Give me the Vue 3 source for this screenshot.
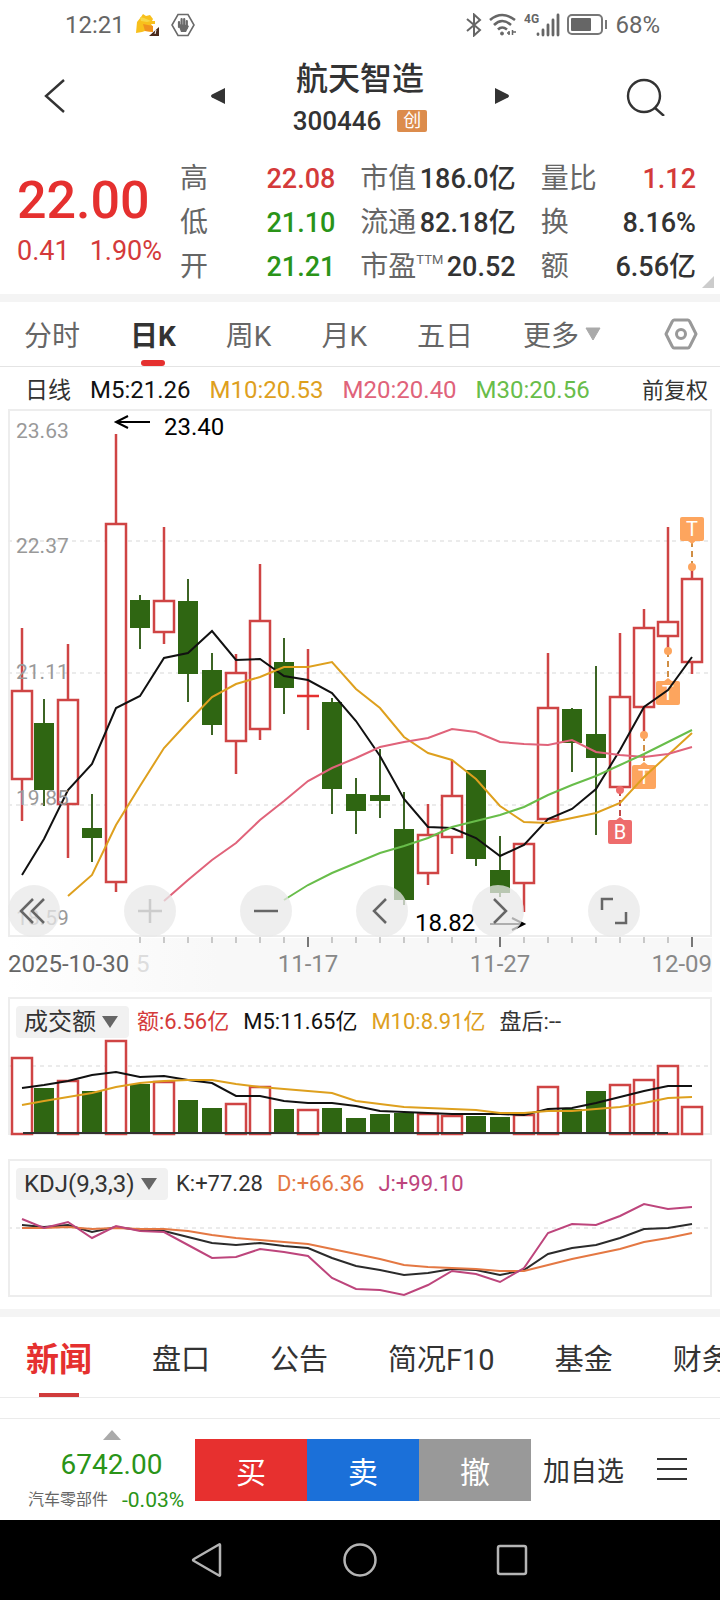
<template>
  <div class="page">
    <!-- Status bar -->
    <div class="status">
      <div class="status-left">
        <span>12:21</span>
        <svg width="26" height="24" viewBox="0 0 26 24">
          <path d="M2 9 L6 4 L8 1 L11 3 L15 2 L18 6 L17 8 L20 8 L20 11 L16 11 L18 14 L18 19 L10 18 L7 19 L1 20 Z" fill="#f8c01c" />
          <path d="M8 11 L18 13 L18 19 L10 18 Z" fill="#f0921e" />
          <path d="M5 4 L9 5 L16 8 L12 9 L6 8 Z" fill="#f6d84a" />
          <path d="M24 14 V23 H14 Z" fill="#4a2a1c" />
          <path d="M21 17 L20 21" stroke="#fff" />
        </svg>
        <svg width="24" height="24" viewBox="0 0 24 24" fill="none" stroke="#6a6a6a">
          <path d="M7 1.5 H17 L23 12 L17 22.5 H7 L1 12 Z" stroke-width="1.6" />
          <path d="M8 9 V14 M10.6 6 V14 M13.2 6 V14 M15.8 8 V15" stroke-width="2.2" stroke-linecap="round" />
          <path d="M7 11 L10 19 H15 L18 13 L16 12 Z" fill="#6a6a6a" stroke="none" />
        </svg>
      </div>
      <div class="status-right">
        <svg width="16" height="24" viewBox="0 0 16 24" fill="none" stroke="#666" stroke-width="2">
          <path d="M1 6 L14 17 L8 22.5 V1.5 L14 7 L1 18" />
        </svg>
        <svg width="28" height="24" viewBox="0 0 28 24" fill="none" stroke="#666" stroke-width="2.6">
          <path d="M1 7 Q13 -3 26 7" />
          <path d="M5 12 Q13 4 22 12" />
          <path d="M9 16.5 Q13 12.5 18 16.5" />
          <circle cx="13" cy="20.5" r="1.5" fill="#666" stroke-width="1" />
          <path d="M20 18 V22 M23.5 17 V22 M18 20 H21 M24 19 H27" stroke-width="1.5" />
        </svg>
        <svg width="36" height="24" viewBox="0 0 36 24" stroke="#666" stroke-width="2.8" stroke-linecap="round">
          <text x="0" y="10" class="network">4G</text>
          <path d="M14 21 V21.5 M19 17 V22 M24 12 V22 M29 7 V22 M34 2 V22" />
        </svg>
        <svg width="41" height="24" viewBox="0 0 41 24">
          <rect x="1" y="2" width="34" height="19" rx="4" fill="none" stroke="#777" stroke-width="2" />
          <rect x="4" y="5" width="20" height="13" rx="1" fill="#666" />
          <path d="M39 7 V16" stroke="#777" stroke-width="2" />
        </svg>
        <span>68%</span>
      </div>
    </div>

    <!-- Stock name -->
    <header class="header">
      <button class="icon-button" aria-label="返回">
        <svg width="40" height="40" viewBox="0 0 40 40" fill="none" stroke="#333" stroke-width="2.4">
          <path d="M28 4 L10 20 L28 36" />
        </svg>
      </button>
      <div class="stock">
        <button class="icon-button" aria-label="上一只">
          <svg width="16" height="18" viewBox="0 0 16 18" fill="#333"><path d="M15 1 V17 L2 10.5 Q0 9 2 7.5 Z" /></svg>
        </button>
        <div class="stock-name">
          <h1>{{ stock.name }}</h1>
          <p>{{ stock.code }} <span class="badge">创</span></p>
        </div>
        <button class="icon-button" aria-label="下一只">
          <svg width="16" height="18" viewBox="0 0 16 18" fill="#333"><path d="M1 1 V17 L14 10.5 Q16 9 14 7.5 Z" /></svg>
        </button>
      </div>
      <button class="icon-button" aria-label="搜索">
        <svg width="40" height="40" viewBox="0 0 40 40" fill="none" stroke="#333" stroke-width="2.4">
          <circle cx="18" cy="20" r="16" />
          <path d="M28.5 31.5 L38 40" />
        </svg>
      </button>
    </header>

    <!-- Quote -->
    <section class="quote">
      <div class="price">
        <strong>{{ stock.price }}</strong>
        <p><span>{{ stock.change }}</span><span>{{ stock.percent }}</span></p>
      </div>
      <dl class="stats">
        <div v-for="s in stats" :key="s.label" class="stat">
          <dt>{{ s.label }}<sup v-if="s.sup">{{ s.sup }}</sup></dt>
          <dd :class="s.color">{{ s.value }}</dd>
        </div>
      </dl>
      <svg class="corner" width="12" height="12" viewBox="0 0 12 12"><path d="M12 0 V12 H0 Z" fill="#ccc" /></svg>
    </section>

    <!-- Period tabs -->
    <nav class="periods">
      <button
        v-for="p in periods"
        :key="p"
        class="period"
        :class="{ active: p === period }"
        @click="period = p"
      >
        {{ p }}
        <svg v-if="p === '更多'" width="16" height="14" viewBox="0 0 16 14"><path d="M1 1 H15 L8 13 Z" fill="#aaa" stroke="#aaa" stroke-linejoin="round" /></svg>
      </button>
      <button class="icon-button settings" aria-label="设置">
        <svg width="34" height="32" viewBox="0 0 34 32" fill="none" stroke="#999" stroke-width="3" stroke-linejoin="round">
          <path d="M10 2 H24 Q25 2 26 4 L32 16 L26 28 Q25 30 24 30 H10 Q9 30 8 28 L2 16 L8 4 Q9 2 10 2 Z" />
          <circle cx="17" cy="16" r="4.5" />
        </svg>
      </button>
    </nav>

    <div class="averages">
      <span class="small">日线</span>
      <span class="black">M5:21.26</span>
      <span class="gold">M10:20.53</span>
      <span class="pink">M20:20.40</span>
      <span class="lime">M30:20.56</span>
      <span class="adjust">前复权</span>
    </div>

    <!-- Candles -->
    <div class="chart">
      <svg class="plot" viewBox="0 402 720 590">
        <defs>
          <linearGradient id="axisFade" x1="0" x2="1" y1="0" y2="0">
            <stop offset="0" stop-color="#fff" />
            <stop offset="0.3" stop-color="#f8f8f8" />
          </linearGradient>
        </defs>
        <rect x="8" y="938" width="704" height="54" fill="url(#axisFade)" />
        <rect x="9" y="410" width="702" height="526" class="frame" />
        <path v-for="y in [541, 673, 805]" :key="y" :d="`M8 ${y} H711`" class="grid" />

        <g v-for="(c, i) in candles" :key="i" :class="c[0] ? 'up' : 'down'">
          <path v-if="c[2] > c[1]" :d="`M${xAt(i)} ${c[1]} V${c[2]}`" />
          <path v-if="c[4] > c[3]" :d="`M${xAt(i)} ${c[3]} V${c[4]}`" />
          <path v-if="c[2] === c[3]" class="flat" :d="`M${xAt(i) - 11} ${c[2]} h22`" />
          <rect v-else :x="xAt(i) - 10" :y="c[2]" width="20" :height="c[3] - c[2]" />
        </g>

        <g v-for="m in marks" :key="m.x" :stroke="m.color">
          <path :d="`M${m.x} ${m.dot} V${m.y}`" class="mark-line" :stroke="m.line" />
          <circle :cx="m.x" :cy="m.dot" r="4" :fill="m.color" stroke="none" />
          <path v-if="m.y > m.dot" :d="`M${m.x - 5} ${m.y - 11} l5 -4 l5 4 Z`" :fill="m.color" stroke="none" />
          <path v-else :d="`M${m.x - 5} ${m.y + 11} l5 4 l5 -4 Z`" :fill="m.color" stroke="none" />
          <rect :x="m.x - 12" :y="m.y - 12" width="24" height="24" rx="2" :fill="m.color" stroke="none" />
          <text :x="m.x" :y="m.y + 7" class="mark-text">{{ m.text }}</text>
        </g>

        <polyline :points="line(ma5)" class="curve" stroke="#111" />
        <polyline :points="line(ma10, 2)" class="curve" stroke="#dea01e" />
        <polyline :points="line(ma20, 6)" class="curve" stroke="#e0637a" />
        <polyline :points="line(ma30, 11)" class="curve" stroke="#68bd4a" />

        <text v-for="l in levels" :key="l.text" x="16" :y="l.y" class="level">{{ l.text }}</text>
        <path d="M150 422 H116 M128 416 L116 422 L128 428" class="arrow" />
        <text x="164" y="435" class="extreme">23.40</text>
        <path d="M490 924 H524 M512 918 L524 924 L512 930" class="arrow" />
        <text x="415" y="931" class="extreme">18.82</text>

        <path v-for="i in 24" :key="i" :d="`M${116 + i * 24} 937 v${i % 8 === 0 ? 10 : 6}`" :class="['tick', { major: i % 8 === 0 }]" />
        <text x="136" y="972" class="date fade">5</text>
        <text x="8" y="972" class="date dark">2025-10-30</text>
        <text x="308" y="972" class="date" text-anchor="middle">11-17</text>
        <text x="500" y="972" class="date" text-anchor="middle">11-27</text>
        <text x="712" y="972" class="date" text-anchor="end">12-09</text>
      </svg>
      <div class="controls">
        <button v-for="c in controls" :key="c.label" :aria-label="c.label">
          <svg width="52" height="52" viewBox="0 0 52 52" :class="{ disabled: c.disabled }"><path :d="c.icon" /></svg>
        </button>
      </div>
    </div>

    <!-- Turnover -->
    <div class="chart">
      <div class="legend">
        <label class="picker">
          <select aria-label="成交指标"><option>成交额</option></select>
          <svg width="18" height="14" viewBox="0 0 18 14"><path d="M1 1 H17 L9 13 Z" /></svg>
        </label>
        <span class="red">额:6.56亿</span>
        <span class="black">M5:11.65亿</span>
        <span class="gold">M10:8.91亿</span>
        <span>盘后:--</span>
      </div>
      <svg class="plot" viewBox="0 992 720 162">
        <rect x="9" y="998" width="702" height="136" class="frame" />
        <path d="M8 1066 H711" class="grid" />
        <g v-for="(v, i) in volumes" :key="i" :class="candles[i][0] ? 'up' : 'down'">
          <rect :x="xAt(i) - 10" :y="v" width="20" :height="1134 - v" />
        </g>
        <path d="M23 1133 H668" class="baseline" />
        <polyline :points="line(vol5)" class="curve" stroke="#111" />
        <polyline :points="line(vol10)" class="curve" stroke="#dea01e" />
      </svg>
    </div>

    <!-- KDJ -->
    <div class="chart">
      <div class="legend">
        <label class="picker">
          <select aria-label="技术指标"><option>KDJ(9,3,3)</option></select>
          <svg width="18" height="14" viewBox="0 0 18 14"><path d="M1 1 H17 L9 13 Z" /></svg>
        </label>
        <span>K:+77.28</span>
        <span class="orange">D:+66.36</span>
        <span class="purple">J:+99.10</span>
      </div>
      <svg class="plot" viewBox="0 1154 720 155">
        <rect x="9" y="1160" width="702" height="136" class="frame" />
        <path d="M8 1228 H711" class="grid" />
        <polyline :points="line(k)" class="curve" stroke="#2b2b2b" />
        <polyline :points="line(d)" class="curve" stroke="#e47843" />
        <polyline :points="line(j)" class="curve" stroke="#bd457c" />
      </svg>
    </div>

    <!-- Info tabs -->
    <nav class="infos">
      <button v-for="t in infos" :key="t" :class="{ active: t === info }" @click="info = t">{{ t }}</button>
    </nav>

    <footer class="trade">
      <div class="sector">
        <svg width="18" height="10" viewBox="0 0 18 10"><path d="M9 0 L18 10 H0 Z" fill="#aaa" /></svg>
        <strong>6742.00</strong>
        <p>汽车零部件 <span>-0.03%</span></p>
      </div>
      <div class="orders">
        <button class="buy">买</button>
        <button class="sell">卖</button>
        <button class="cancel">撤</button>
      </div>
      <button class="watch">加自选</button>
      <button class="icon-button" aria-label="菜单">
        <svg width="32" height="24" viewBox="0 0 32 24" stroke="#333" stroke-width="2"><path d="M1 1 H31 M1 11 H31 M1 21 H31" /></svg>
      </button>
    </footer>

    <!-- System keys -->
    <div class="system">
      <button class="icon-button" aria-label="后退">
        <svg width="36" height="36" viewBox="0 0 36 36"><path d="M31 3 V33 Q31 34 30 33.5 L5 19 Q3 18 5 17 L30 2.5 Q31 2 31 3 Z" /></svg>
      </button>
      <button class="icon-button" aria-label="主屏幕">
        <svg width="36" height="36" viewBox="0 0 36 36"><circle cx="18" cy="18" r="15.5" /></svg>
      </button>
      <button class="icon-button" aria-label="最近任务">
        <svg width="36" height="36" viewBox="0 0 36 36"><rect x="3" y="4" width="28" height="28" rx="2" /></svg>
      </button>
    </div>
  </div>
</template>

<script setup>
import { ref } from 'vue'

const stock = { name: '航天智造', code: '300446', price: '22.00', change: '0.41', percent: '1.90%' }

const stats = [
  { label: '高', value: '22.08', color: 'red' },
  { label: '市值', value: '186.0亿' },
  { label: '量比', value: '1.12', color: 'red' },
  { label: '低', value: '21.10', color: 'green' },
  { label: '流通', value: '82.18亿' },
  { label: '换', value: '8.16%' },
  { label: '开', value: '21.21', color: 'green' },
  { label: '市盈', sup: 'TTM', value: '20.52' },
  { label: '额', value: '6.56亿' },
]

const periods = ['分时', '日K', '周K', '月K', '五日', '更多']
const period = ref('日K')

const infos = ['新闻', '盘口', '公告', '简况F10', '基金', '财务']
const info = ref('新闻')

// [up, high, body top, body bottom, low]
const candles = [
  [1, 628, 691, 779, 821],
  [0, 699, 723, 790, 806],
  [1, 644, 700, 804, 858],
  [0, 794, 828, 838, 862],
  [1, 434, 524, 882, 892],
  [0, 595, 600, 628, 649],
  [1, 527, 601, 632, 644],
  [0, 579, 601, 674, 702],
  [0, 653, 670, 725, 735],
  [1, 654, 673, 741, 774],
  [1, 564, 621, 729, 740],
  [0, 638, 662, 688, 714],
  [1, 649, 696, 696, 730],
  [0, 698, 702, 789, 814],
  [0, 778, 794, 811, 834],
  [0, 749, 795, 801, 818],
  [0, 792, 829, 900, 905],
  [1, 804, 835, 873, 885],
  [1, 760, 796, 837, 854],
  [0, 770, 770, 859, 866],
  [0, 836, 870, 893, 897],
  [1, 844, 844, 883, 912],
  [1, 653, 708, 819, 819],
  [0, 708, 709, 743, 772],
  [0, 666, 734, 758, 835],
  [1, 633, 697, 787, 787],
  [1, 609, 628, 707, 735],
  [1, 527, 622, 636, 651],
  [1, 567, 579, 662, 674],
]

const ma5 = [875, 839, 790, 764, 708, 696, 658, 653, 631, 660, 659, 676, 680, 693, 721, 756, 799, 827, 828, 838, 856, 845, 819, 809, 789, 750, 707, 690, 657]
const ma10 = [896, 875, 825, 786, 748, 722, 697, 684, 677, 667, 667, 662, 689, 708, 737, 753, 760, 779, 806, 822, 823, 818, 813, 803, 777, 755, 733]
const ma20 = [901, 880, 860, 843, 820, 801, 781, 768, 758, 747, 742, 738, 729, 732, 742, 744, 745, 740, 752, 755, 757, 754, 747]
const ma30 = [900, 885, 873, 863, 853, 846, 838, 827, 821, 815, 807, 795, 785, 776, 765, 754, 742, 730]

const volumes = [1058, 1088, 1081, 1091, 1041, 1084, 1082, 1100, 1108, 1104, 1087, 1109, 1110, 1108, 1118, 1114, 1113, 1114, 1116, 1116, 1117, 1115, 1087, 1109, 1091, 1085, 1080, 1066, 1107]
const vol5 = [1088, 1085, 1081, 1075, 1072, 1077, 1076, 1080, 1083, 1096, 1096, 1101, 1103, 1103, 1106, 1111, 1112, 1113, 1114, 1114, 1114, 1115, 1109, 1108, 1103, 1097, 1091, 1086, 1086]
const vol10 = [1105, 1101, 1097, 1093, 1087, 1083, 1081, 1080, 1080, 1084, 1087, 1089, 1091, 1093, 1101, 1104, 1107, 1108, 1109, 1110, 1113, 1113, 1111, 1111, 1109, 1107, 1103, 1098, 1097]

const k = [1225, 1227, 1225, 1232, 1227, 1230, 1231, 1237, 1243, 1245, 1243, 1246, 1248, 1258, 1266, 1270, 1275, 1273, 1269, 1270, 1275, 1270, 1254, 1248, 1245, 1238, 1229, 1228, 1224]
const d = [1228, 1228, 1227, 1229, 1228, 1229, 1229, 1231, 1235, 1238, 1240, 1242, 1244, 1249, 1254, 1259, 1265, 1267, 1268, 1269, 1271, 1271, 1265, 1259, 1254, 1249, 1242, 1238, 1233]
const j = [1219, 1228, 1222, 1238, 1226, 1231, 1232, 1245, 1258, 1257, 1249, 1252, 1256, 1278, 1289, 1290, 1295, 1285, 1271, 1274, 1282, 1268, 1233, 1224, 1225, 1216, 1204, 1209, 1207]

const marks = [
  { text: 'B', x: 620, y: 832, dot: 790, color: '#ee6c6c', line: '#c04a4a' },
  { text: 'T', x: 644, y: 777, dot: 735, color: '#fda55e', line: '#d08e45' },
  { text: 'T', x: 668, y: 693, dot: 651, color: '#fda55e', line: '#d08e45' },
  { text: 'T', x: 692, y: 529, dot: 567, color: '#fda55e', line: '#d08e45' },
]

const levels = [
  { text: '23.63', y: 438 },
  { text: '22.37', y: 553 },
  { text: '21.11', y: 679 },
  { text: '19.85', y: 805 },
  { text: '18.59', y: 925 },
]

const controls = [
  { label: '最左', icon: 'M25 14 L13 26 L25 38 M36 14 L24 26 L36 38' },
  { label: '放大', icon: 'M14 26 H38 M26 14 V38', disabled: true },
  { label: '缩小', icon: 'M14 26 H38' },
  { label: '左移', icon: 'M30 14 L18 26 L30 38' },
  { label: '右移', icon: 'M22 14 L34 26 L22 38' },
  { label: '全屏', icon: 'M14 25 V14 H25 M38 27 V38 H27' },
]

const xAt = (i) => (i === 0 ? 22 : 20 + i * 24)
const line = (ys, start = 0) => ys.map((y, i) => `${xAt(i + start)},${y}`).join(' ')
</script>

<style>
body {
  margin: 0;
  background: #fff;
}
</style>

<style scoped>
.page {
  font-family: Roboto, 'Noto Sans CJK SC', sans-serif;
  color: #333;
  overflow: hidden;
}

h1,
p,
dl,
dd {
  margin: 0;
}

button {
  border: none;
  background: none;
  padding: 0;
  font: inherit;
  color: inherit;
  cursor: pointer;
}

svg {
  display: block;
}

.icon-button {
  flex: none;
}

.red {
  color: #d43a3a;
}
.green {
  color: #2a9418;
}
.black {
  color: #111;
}
.gold {
  color: #dea01e;
}
.pink {
  color: #e0637a;
}
.lime {
  color: #68bd4a;
}
.orange {
  color: #e47843;
}
.purple {
  color: #bd457c;
}

/* status bar */
.status {
  display: flex;
  justify-content: space-between;
  height: 50px;
  padding: 0 60px 0 65px;
  font-size: 24px;
  color: #666;
}
.status-left,
.status-right {
  display: flex;
  align-items: center;
}
.status-left {
  gap: 10px;
}
.status-right {
  gap: 7px;
}
.network {
  font-size: 12px;
  font-weight: bold;
  fill: #666;
  stroke: none;
}

/* header */
.header {
  display: grid;
  grid-template-columns: 1fr 300px 1fr;
  align-items: center;
  height: 92px;
  padding: 0 54px 0 36px;
}
.header > :first-child {
  justify-self: start;
}
.header > :last-child {
  justify-self: end;
}
.header {
  padding: 0 36px;
}
.header > :last-child {
  margin-right: 18px;
}
.stock {
  display: flex;
  align-items: center;
  justify-content: space-between;
}
.stock-name {
  padding-top: 5px;
  text-align: center;
}
.stock-name h1 {
  font-size: 32px;
  line-height: 44px;
  font-weight: 500;
}
.stock-name p {
  display: flex;
  align-items: center;
  justify-content: center;
  gap: 16px;
  font-size: 26px;
  line-height: 40px;
  font-weight: 500;
}
.badge {
  width: 30px;
  font-size: 18px;
  line-height: 22px;
  font-weight: 400;
  color: #fff;
  background: #dc8c4c;
  border-radius: 2px;
}

/* quote */
.quote {
  position: relative;
  display: flex;
  height: 137px;
  padding: 15px 24px 0 17px;
  border-bottom: 8px solid #f4f4f4;
}
.price {
  flex: none;
  width: 163px;
  color: #e5302f;
}
.price strong {
  display: block;
  font-size: 52px;
  line-height: 64px;
  font-weight: 500;
  margin-top: 12px;
}
.price p {
  display: flex;
  gap: 20px;
  font-size: 27px;
  line-height: 36px;
  color: #d43a3a;
}
.stats {
  flex: 1;
  display: grid;
  grid-template-columns: repeat(3, 1fr);
  grid-auto-rows: 44px;
  column-gap: 25px;
}
.stat {
  display: flex;
  justify-content: space-between;
  line-height: 44px;
  white-space: nowrap;
}
.stat dt {
  font-size: 28px;
  color: #666;
}
.stat sup {
  font-size: 13px;
  line-height: 14px;
  vertical-align: 12px;
}
.stat dd {
  font-size: 27px;
  font-weight: 500;
}
.corner {
  position: absolute;
  right: 6px;
  bottom: 6px;
}

/* period tabs */
.periods {
  display: flex;
  align-items: center;
  gap: 50px;
  height: 64px;
  padding: 0 22px 0 24px;
  border-bottom: 1px solid #e4e4e4;
  font-size: 28px;
  color: #666;
  white-space: nowrap;
}
.period {
  position: relative;
  display: flex;
  align-items: center;
  gap: 6px;
  height: 64px;
}
.period.active {
  font-weight: bold;
  color: #333;
}
.period.active::after {
  content: '';
  position: absolute;
  left: 50%;
  bottom: 0;
  width: 24px;
  height: 6px;
  margin-left: -12px;
  border-radius: 3px;
  background: #e5302f;
}
.settings {
  margin-left: auto;
}

.averages {
  display: flex;
  align-items: baseline;
  gap: 19px;
  height: 35px;
  padding: 4px 12px 0 25px;
  box-sizing: border-box;
  font-size: 24px;
  white-space: nowrap;
}
.small {
  font-size: 23px;
}
.adjust {
  margin-left: auto;
  font-size: 22px;
}

/* charts */
.chart {
  position: relative;
}
.plot {
  width: 100%;
  height: auto;
}
.frame {
  fill: none;
  stroke: #ededed;
  stroke-width: 2;
}
.grid {
  stroke: #ebebeb;
  stroke-width: 2;
  stroke-dasharray: 4;
}
.curve {
  fill: none;
  stroke-width: 2;
}
.up {
  fill: #fff;
  stroke: #cf4444;
  stroke-width: 2.5;
}
.down {
  fill: #2f6612;
}
.down path {
  stroke: #3c6424;
  stroke-width: 2;
}
.flat {
  stroke: #e5302f;
}
.baseline {
  stroke: #333;
  stroke-width: 2;
}
.mark-line {
  stroke-width: 2;
  stroke-dasharray: 6 4;
}
.mark-text {
  font-size: 20px;
  text-anchor: middle;
  fill: #fff;
  stroke: none;
}
.level {
  font-size: 21px;
  fill: #999;
}
.extreme {
  font-size: 24px;
  fill: #000;
}
.arrow {
  fill: none;
  stroke: #000;
  stroke-width: 2;
}
.tick {
  stroke: #999;
}
.tick.major {
  stroke: #777;
  stroke-width: 2;
}
.date {
  font-size: 24px;
  fill: #888;
}
.date.dark {
  fill: #666;
}
.date.fade {
  fill: #ddd;
}

.controls {
  position: absolute;
  left: 8px;
  bottom: 55px;
  display: flex;
  gap: 64px;
}
.controls button {
  border-radius: 50%;
  background: rgba(232, 232, 232, 0.75);
}
.controls path {
  fill: none;
  stroke: #666;
  stroke-width: 2.5;
}
.controls .disabled path {
  stroke: #ccc;
}

.legend {
  position: absolute;
  top: 13px;
  left: 16px;
  display: flex;
  align-items: center;
  gap: 14px;
  font-size: 22px;
  line-height: 34px;
  white-space: nowrap;
}
.picker {
  position: relative;
  margin-right: -6px;
}
.picker select {
  display: block;
  appearance: none;
  height: 32px;
  padding: 0 33px 0 8px;
  border: none;
  border-radius: 4px;
  background: #f1f1f1;
  color: #333;
  font-family: inherit;
  font-size: 24px;
}
.picker svg {
  position: absolute;
  right: 10px;
  top: 9px;
  fill: #666;
  pointer-events: none;
}

/* info tabs */
.infos {
  display: flex;
  gap: 60px;
  height: 80px;
  padding-left: 26px;
  border-top: 8px solid #f4f4f4;
  border-bottom: 1px solid #ebebeb;
  font-size: 29px;
  white-space: nowrap;
}
.infos button {
  position: relative;
  flex: none;
}
.infos .active {
  font-size: 33px;
  font-weight: bold;
  color: #e5302f;
}
.infos .active::after {
  content: '';
  position: absolute;
  left: 50%;
  bottom: 0;
  width: 40px;
  height: 4px;
  margin-left: -20px;
  background: #d03b3b;
}

/* trade bar */
.trade {
  display: flex;
  align-items: center;
  height: 101px;
  margin-top: 20px;
  padding-right: 32px;
  border-top: 1px solid #ebebeb;
}
.sector {
  flex: none;
  display: flex;
  flex-direction: column;
  align-items: center;
  width: 195px;
  padding-left: 28px;
  box-sizing: border-box;
  color: #2a9418;
}
.sector strong {
  font-size: 28px;
  line-height: 50px;
  font-weight: 400;
}
.sector p {
  display: flex;
  gap: 14px;
  align-self: flex-start;
  font-size: 16px;
  line-height: 20px;
  color: #666;
  white-space: nowrap;
}
.sector span {
  font-size: 21px;
  color: #2a9418;
}
.orders {
  flex: 1;
  display: flex;
  font-size: 30px;
  color: #fff;
}
.orders button {
  flex: 1;
  height: 62px;
}
.buy {
  background: #e7302f;
}
.sell {
  background: #1b70d9;
}
.cancel {
  background: #999;
}
.watch {
  margin: 0 32px 0 12px;
  font-size: 27px;
}

.system {
  display: flex;
  justify-content: center;
  align-items: center;
  gap: 117px;
  height: 80px;
  background: #000;
}
.system svg {
  fill: none;
  stroke: #b4b4b4;
  stroke-width: 2.5;
}
</style>
